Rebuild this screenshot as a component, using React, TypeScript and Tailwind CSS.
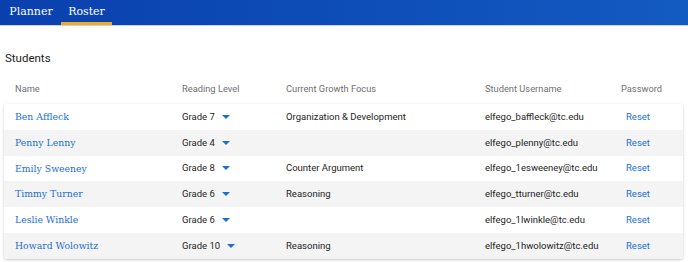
import React from "react";

const rows = [
  { name: "Ben Affleck", grade: "Grade 7", focus: "Organization & Development", user: "elfego_baffleck@tc.edu" },
  { name: "Penny Lenny", grade: "Grade 4", focus: "", user: "elfego_plenny@tc.edu" },
  { name: "Emily Sweeney", grade: "Grade 8", focus: "Counter Argument", user: "elfego_1esweeney@tc.edu" },
  { name: "Timmy Turner", grade: "Grade 6", focus: "Reasoning", user: "elfego_tturner@tc.edu" },
  { name: "Leslie Winkle", grade: "Grade 6", focus: "", user: "elfego_1lwinkle@tc.edu" },
  { name: "Howard Wolowitz", grade: "Grade 10", focus: "Reasoning", user: "elfego_1hwolowitz@tc.edu" },
];

const cols = "grid grid-cols-[167px_104px_199px_136px_1fr]";
const slab = { fontFamily: "'DejaVu Serif', serif" };

export default function App() {
  return (
    <div className="w-[688px] h-[262px] bg-white overflow-hidden" style={{ fontFamily: "Roboto, sans-serif" }}>
      <div className="h-[26px] bg-gradient-to-r from-[#0a40ae] to-[#135ac1] flex pl-[1px] border-b border-[#c9d3e6]">
        <div className="flex h-full" style={slab}>
          <div className="w-[60px] flex items-center justify-center text-white text-[11px] pb-[1px]">Planner</div>
          <div className="w-[51px] flex items-center justify-center text-white text-[11px] border-b-[3px] border-[#f7a81b] pt-[2px]">Roster</div>
        </div>
      </div>
      <div className="px-[4px]">
        <div className="text-[11.5px] text-[#222] mt-[25px] ml-[1px] leading-[14px]">Students</div>
        <div className={`${cols} mt-[16px] h-[16px] items-center text-[9.3px] text-[#707070] pl-[11px]`}>
          <div>Name</div>
          <div>Reading Level</div>
          <div>Current Growth Focus</div>
          <div>Student Username</div>
          <div>Password</div>
        </div>
        <div className="mt-[7px] rounded-[3px] shadow-[0_1px_3px_rgba(0,0,0,0.22)] overflow-hidden w-[679px]">
          {rows.map((r, i) => (
            <div key={i} className={`${cols} h-[25.8px] items-center pl-[11px] text-[9.5px] text-[#1e1e1e] ${i % 2 === 1 ? "bg-[#f4f4f4]" : "bg-white"}`}>
              <div className="text-[#1a6fd6] text-[9.3px]" style={slab}>{r.name}</div>
              <div className="flex items-center">
                <span>{r.grade}</span>
                <svg width="8" height="4" viewBox="0 0 8 4" className="ml-[7px]"><path d="M0 0h8L4 4z" fill="#1a6fd6" /></svg>
              </div>
              <div>{r.focus}</div>
              <div>{r.user}</div>
              <div className="pl-[5px] text-[#1a6fd6]">Reset</div>
            </div>
          ))}
        </div>
      </div>
    </div>
  );
}
